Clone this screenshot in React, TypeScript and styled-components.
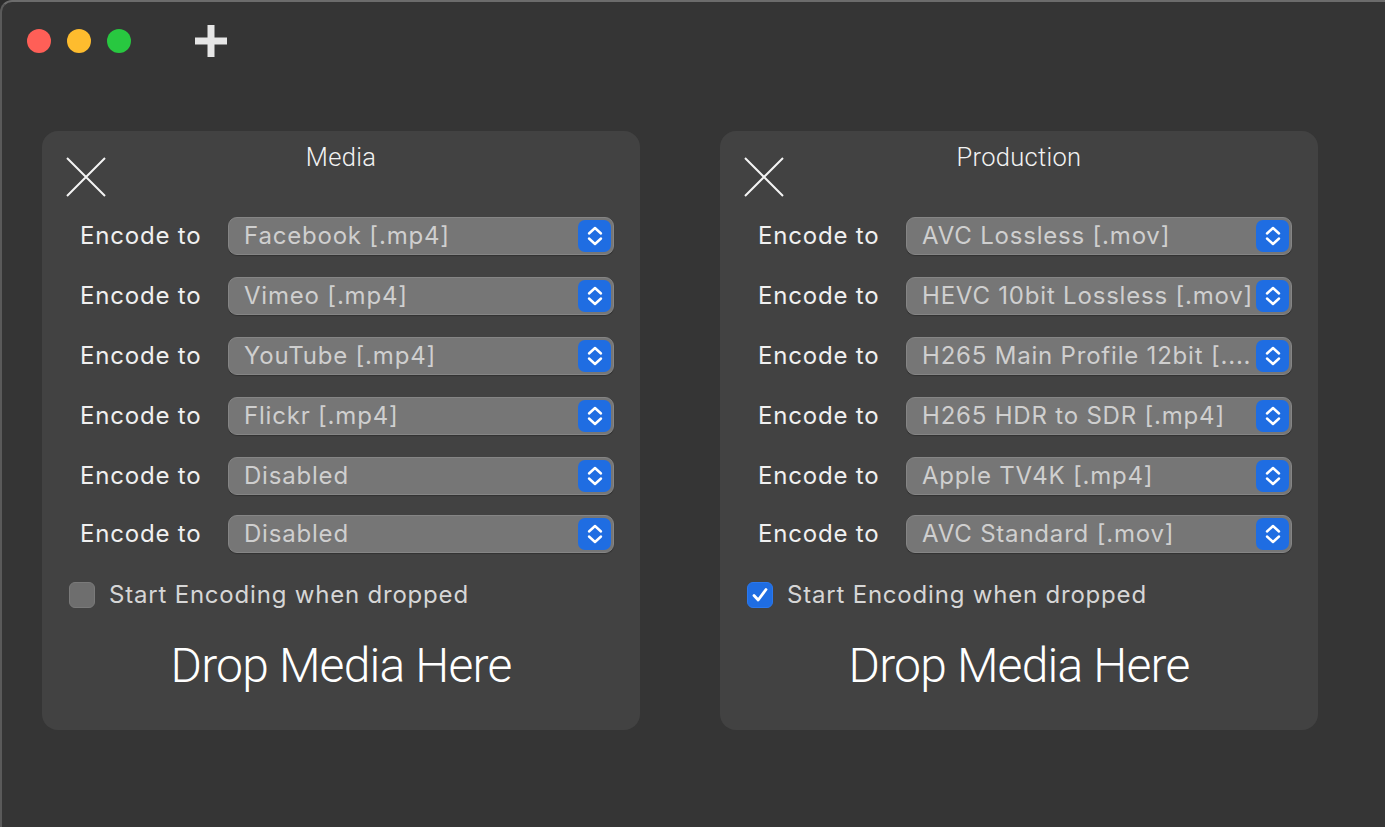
import React from "react";
import styled, { createGlobalStyle } from "styled-components";

const Global = createGlobalStyle`
  html, body { margin: 0; padding: 0; background: #2c2c2c; }
  body { width: 1385px; height: 827px; overflow: hidden; }
  * { box-sizing: border-box; }
`;

const Window = styled.div`
  width: 1385px;
  height: 827px;
  background: #353535;
  border-top: 2px solid #6c6c6c;
  border-left: 2px solid #5a5a5a;
  border-top-left-radius: 12px;
  display: flex;
  flex-direction: column;
  font-family: Inter, "Noto Sans", sans-serif;
`;

const TitleBar = styled.div`
  height: 76px;
  display: flex;
  align-items: center;
  padding-left: 25px;
  padding-top: 1px;
`;

const Light = styled.span<{ $c: string }>`
  width: 24px;
  height: 24px;
  border-radius: 50%;
  background: ${(p) => p.$c};
  margin-right: 16px;
`;

const PlusButton = styled.span`
  display: flex;
  margin-left: 48px;
`;

const Panels = styled.div`
  display: flex;
  gap: 80px;
  padding-left: 40px;
  padding-top: 53px;
`;

const Panel = styled.section`
  width: 598px;
  height: 599px;
  background: #424242;
  border-radius: 16px;
  display: flex;
  flex-direction: column;
`;

const Header = styled.div`
  height: 86px;
  display: grid;
  grid-template-columns: 1fr auto 1fr;
`;

const CloseIcon = styled.span`
  display: flex;
  margin-top: 26px;
  margin-left: 24px;
  align-self: start;
  justify-self: start;
`;

const Title = styled.h2`
  margin: 12px 0 0;
  font-family: Roboto, "Liberation Sans", sans-serif;
  font-weight: 300;
  font-size: 25.5px;
  letter-spacing: 0.3px;
  line-height: 28px;
  color: #f2f2f2;
`;

const Rows = styled.div`
  display: flex;
  flex-direction: column;
  gap: 22px;
  padding-left: 38px;
  padding-right: 26px;
  & > *:last-child { margin-top: -2px; }
`;

const Row = styled.div`
  display: flex;
  align-items: center;
  height: 38px;
`;

const Label = styled.span`
  width: 148px;
  font-size: 24px;
  color: #f0f0f0;
  letter-spacing: 0.8px;
  margin-top: -2px;
`;

const Select = styled.div`
  flex: 1;
  height: 38px;
  background: #767676;
  border: 1px solid #858585;
  border-radius: 9px;
  display: flex;
  align-items: center;
  padding-left: 15px;
  padding-right: 2px;
  box-shadow: 0 1px 1px rgba(0, 0, 0, 0.25);
`;

const SelectText = styled.span`
  flex: 1;
  font-size: 24px;
  letter-spacing: 0.8px;
  color: #cfcfcf;
  white-space: nowrap;
  overflow: hidden;
  margin-top: -2px;
`;

const Stepper = styled.span`
  width: 33px;
  height: 32px;
  border-radius: 7px;
  background: #1f6de2;
  display: flex;
  align-items: center;
  justify-content: center;
`;

const CheckRow = styled.label`
  display: flex;
  align-items: center;
  gap: 14px;
  margin-top: 29px;
  padding-left: 27px;
  height: 26px;
`;

const Box = styled.span<{ $on: boolean }>`
  width: 26px;
  height: 26px;
  border-radius: 6px;
  background: ${(p) => (p.$on ? "#1f6de2" : "#6e6e6e")};
  border: 1px solid ${(p) => (p.$on ? "#2a78ee" : "#7a7a7a")};
  display: flex;
  align-items: center;
  justify-content: center;
`;

const CheckText = styled.span`
  font-size: 24px;
  letter-spacing: 0.8px;
  color: #d6d6d6;
  margin-top: -2px;
`;

const Drop = styled.div`
  margin-top: 28px;
  text-align: center;
  font-family: Roboto, "Liberation Sans", sans-serif;
  font-weight: 300;
  font-size: 48px;
  letter-spacing: -0.8px;
  line-height: 60px;
  color: #ffffff;
`;

const Chevrons = () => (
  <svg width="20" height="24" viewBox="0 0 20 24" fill="none">
    <path d="M4 9.5 L10 4 L16 9.5" stroke="#fff" strokeWidth="2.4" strokeLinecap="round" strokeLinejoin="round" />
    <path d="M4 14.5 L10 20 L16 14.5" stroke="#fff" strokeWidth="2.4" strokeLinecap="round" strokeLinejoin="round" />
  </svg>
);

const Check = () => (
  <svg width="20" height="20" viewBox="0 0 20 20" fill="none">
    <path d="M4 10.5 L8.2 15 L16 4.5" stroke="#fff" strokeWidth="2.8" strokeLinecap="round" strokeLinejoin="round" />
  </svg>
);

const XIcon = () => (
  <svg width="40" height="40" viewBox="0 0 40 40" fill="none">
    <path d="M1 1 L39 39 M39 1 L1 39" stroke="#f4f4f4" strokeWidth="2" />
  </svg>
);

const Plus = () => (
  <svg width="32" height="32" viewBox="0 0 32 32">
    <rect x="12.5" y="0" width="7" height="32" fill="#e6e6e6" />
    <rect x="0" y="12.5" width="32" height="7" fill="#e6e6e6" />
  </svg>
);

type PanelData = { title: string; items: string[]; checked: boolean };

const panels: PanelData[] = [
  {
    title: "Media",
    items: ["Facebook [.mp4]", "Vimeo [.mp4]", "YouTube [.mp4]", "Flickr [.mp4]", "Disabled", "Disabled"],
    checked: false,
  },
  {
    title: "Production",
    items: [
      "AVC Lossless [.mov]",
      "HEVC 10bit Lossless [.mov]",
      "H265 Main Profile 12bit [....",
      "H265 HDR to SDR [.mp4]",
      "Apple TV4K [.mp4]",
      "AVC Standard [.mov]",
    ],
    checked: true,
  },
];

export default function App() {
  return (
    <>
      <Global />
      <Window>
        <TitleBar>
          <Light $c="#ff5f57" />
          <Light $c="#febc2e" />
          <Light $c="#28c840" />
          <PlusButton>
            <Plus />
          </PlusButton>
        </TitleBar>
        <Panels>
          {panels.map((p) => (
            <Panel key={p.title}>
              <Header>
                <CloseIcon>
                  <XIcon />
                </CloseIcon>
                <Title>{p.title}</Title>
                <span />
              </Header>
              <Rows>
                {p.items.map((it, i) => (
                  <Row key={i}>
                    <Label>Encode to</Label>
                    <Select>
                      <SelectText>{it}</SelectText>
                      <Stepper>
                        <Chevrons />
                      </Stepper>
                    </Select>
                  </Row>
                ))}
              </Rows>
              <CheckRow>
                <Box $on={p.checked}>{p.checked && <Check />}</Box>
                <CheckText>Start Encoding when dropped</CheckText>
              </CheckRow>
              <Drop>Drop Media Here</Drop>
            </Panel>
          ))}
        </Panels>
      </Window>
    </>
  );
}
